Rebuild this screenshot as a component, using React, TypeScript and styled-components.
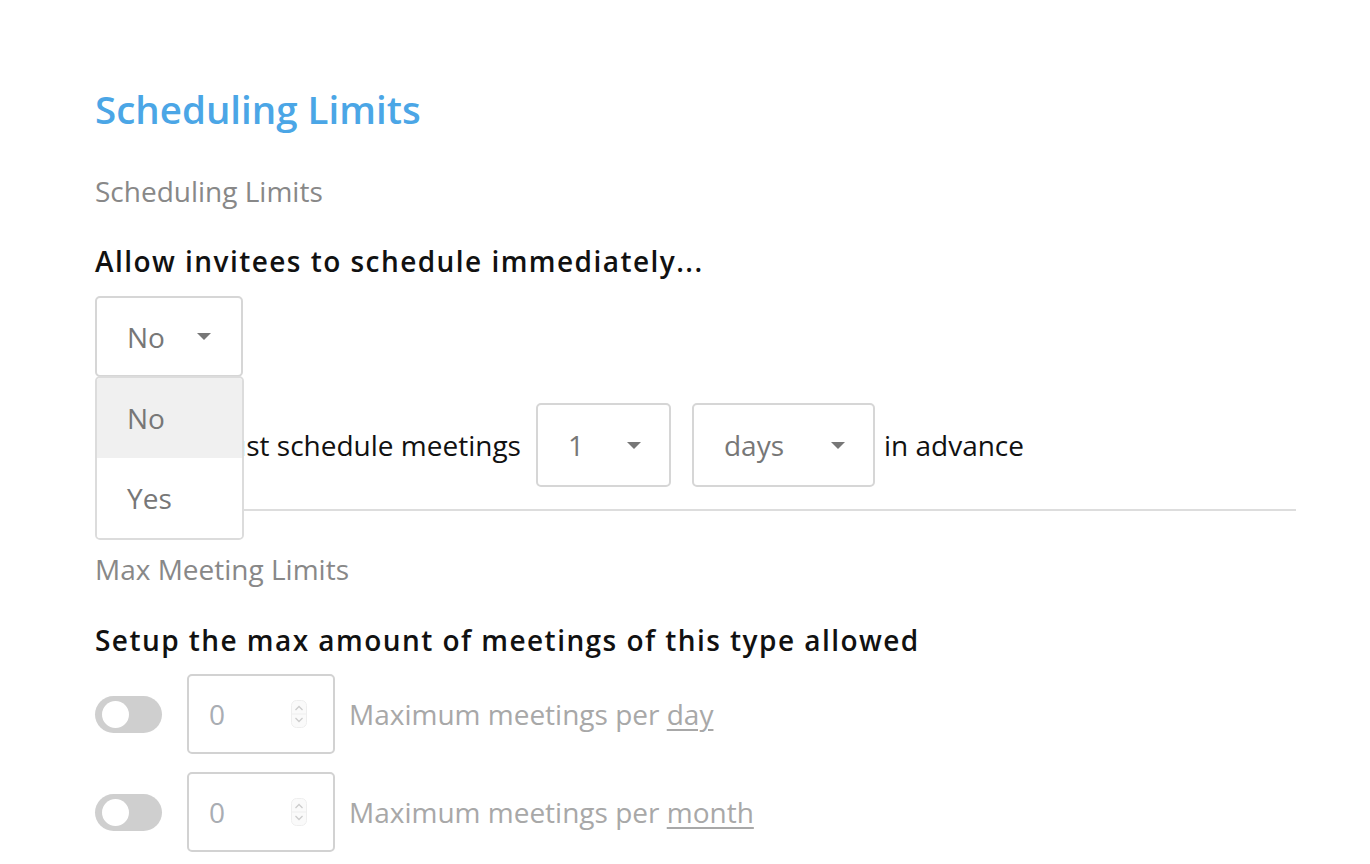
import React from "react";
import styled, { createGlobalStyle } from "styled-components";

const Global = createGlobalStyle`
  html, body { margin: 0; padding: 0; background: #fff; }
  body { font-family: "Open Sans", "Noto Sans", sans-serif; }
`;

const Page = styled.div`
  padding: 85px 0 0 95px;
  width: 1201px;
`;

const Title = styled.h1`
  margin: 0;
  font-size: 38.5px;
  line-height: 48px;
  font-weight: 600;
  color: #4ba6e6;
`;

const SectionLabel = styled.div<{ $mt: number }>`
  margin-top: ${(p) => p.$mt}px;
  font-size: 28px;
  line-height: 40px;
  color: #888;
`;

const Question = styled.div<{ $mt: number }>`
  margin-top: ${(p) => p.$mt}px;
  font-size: 28px;
  line-height: 40px;
  font-weight: 600;
  letter-spacing: 1.45px;
  color: #111;
`;

const SelectWrap = styled.div`
  position: relative;
  margin-top: 15px;
  width: 148px;
  z-index: 2;
`;

const SelectBox = styled.div<{ $w: number; $h: number }>`
  box-sizing: border-box;
  width: ${(p) => p.$w}px;
  height: ${(p) => p.$h}px;
  border: 2px solid #d6d6d6;
  border-radius: 5px;
  display: flex;
  align-items: center;
  justify-content: space-between;
  padding: 0 30px 0 30px;
  font-size: 28px;
  color: #777;
  background: #fff;
`;

const Caret = styled.span`
  width: 0;
  height: 0;
  border-left: 7px solid transparent;
  border-right: 7px solid transparent;
  border-top: 7px solid #777;
`;

const Menu = styled.div`
  position: absolute;
  left: 0;
  top: 80px;
  box-sizing: border-box;
  width: 149px;
  border: 2px solid #dcdcdc;
  border-radius: 5px;
  background: #fff;
  overflow: hidden;
`;

const MenuItem = styled.div<{ $active?: boolean }>`
  height: 80px;
  display: flex;
  align-items: center;
  padding-left: 30px;
  font-size: 28px;
  color: #777;
  background: ${(p) => (p.$active ? "#f0f0f0" : "#fff")};
`;

const AdvanceRow = styled.div`
  margin-top: 26px;
  display: flex;
  align-items: center;
  font-size: 28px;
  color: #111;
`;

const RowText = styled.span<{ $ml?: number }>`
  margin-left: ${(p) => p.$ml ?? 0}px;
  white-space: nowrap;
`;

const RowSelect = styled(SelectBox)<{ $ml: number }>`
  margin-left: ${(p) => p.$ml}px;
  padding: 0 28px 0 30px;
`;

const Divider = styled.hr`
  margin: 22px 0 0 0;
  border: none;
  border-top: 2px solid #ddd;
  width: 1201px;
`;

const LimitRow = styled.div<{ $mt: number }>`
  margin-top: ${(p) => p.$mt}px;
  display: flex;
  align-items: center;
`;

const Toggle = styled.div`
  width: 67px;
  height: 37px;
  border-radius: 19px;
  background: #cfcfcf;
  position: relative;
  flex-shrink: 0;
`;

const Knob = styled.span`
  position: absolute;
  left: 7px;
  top: 5px;
  width: 27px;
  height: 27px;
  border-radius: 50%;
  background: #fff;
`;

const NumberBox = styled.div`
  box-sizing: border-box;
  margin-left: 25px;
  width: 148px;
  height: 80px;
  border: 2px solid #d2d2d2;
  border-radius: 5px;
  display: flex;
  align-items: center;
  justify-content: space-between;
  padding: 0 26px 0 20px;
  font-size: 28px;
  color: #a9adb3;
`;

const Spinner = styled.svg`
  width: 16px;
  height: 28px;
`;

const LimitText = styled.span`
  margin-left: 14px;
  font-size: 28px;
  color: #a8a8a8;
  white-space: nowrap;
`;

const Under = styled.span`
  text-decoration: underline;
  text-underline-offset: 4px;
  text-decoration-thickness: 2px;
`;

const SpinIcon = () => (
  <Spinner viewBox="0 0 16 28">
    <rect x="0.5" y="0.5" width="15" height="27" rx="5" fill="#fafafa" stroke="#eee" />
    <line x1="1" y1="14" x2="15" y2="14" stroke="#eee" />
    <path d="M4.5 10 L8 6.5 L11.5 10" fill="none" stroke="#ccc" strokeWidth="1.3" />
    <path d="M4.5 18 L8 21.5 L11.5 18" fill="none" stroke="#ccc" strokeWidth="1.3" />
  </Spinner>
);

export default function App() {
  return (
    <>
      <Global />
      <Page>
        <Title>Scheduling Limits</Title>
        <SectionLabel $mt={38}>Scheduling Limits</SectionLabel>
        <Question $mt={30}>Allow invitees to schedule immediately...</Question>
        <SelectWrap>
          <SelectBox $w={148} $h={81}>
            <span>No</span>
            <Caret />
          </SelectBox>
          <Menu>
            <MenuItem $active>No</MenuItem>
            <MenuItem>Yes</MenuItem>
          </Menu>
        </SelectWrap>
        <AdvanceRow>
          <RowText>Invitees must schedule meetings</RowText>
          <RowSelect $w={135} $h={84} $ml={15}>
            <span>1</span>
            <Caret />
          </RowSelect>
          <RowSelect $w={183} $h={84} $ml={21}>
            <span>days</span>
            <Caret />
          </RowSelect>
          <RowText $ml={9}>in advance</RowText>
        </AdvanceRow>
        <Divider />
        <SectionLabel $mt={38}>Max Meeting Limits</SectionLabel>
        <Question $mt={31}>Setup the max amount of meetings of this type allowed</Question>
        <LimitRow $mt={14}>
          <Toggle><Knob /></Toggle>
          <NumberBox>
            <span>0</span>
            <SpinIcon />
          </NumberBox>
          <LimitText>
            Maximum meetings per <Under>day</Under>
          </LimitText>
        </LimitRow>
        <LimitRow $mt={18}>
          <Toggle><Knob /></Toggle>
          <NumberBox>
            <span>0</span>
            <SpinIcon />
          </NumberBox>
          <LimitText>
            Maximum meetings per <Under>month</Under>
          </LimitText>
        </LimitRow>
      </Page>
    </>
  );
}
